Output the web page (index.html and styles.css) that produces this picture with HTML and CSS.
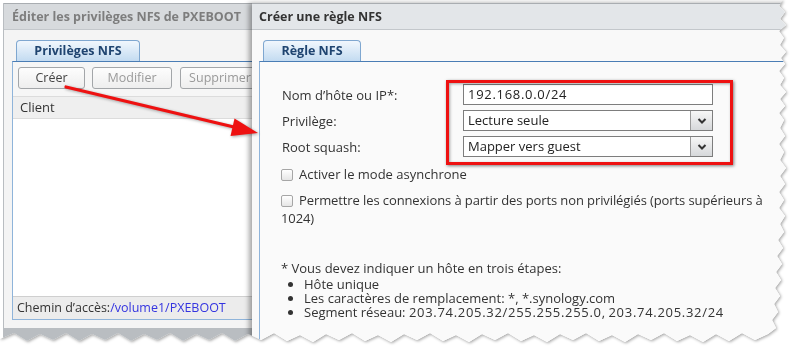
FILE: index.html
```html
<!DOCTYPE html>
<html lang="fr">
<head>
<meta charset="utf-8">
<title>Règle NFS</title>
<link rel="stylesheet" href="styles.css">
</head>
<body>
<div class="stage">
  <div class="paper">
    <div class="sheet">
      <section class="win win-left">
        <header class="titlebar">Éditer les privilèges NFS de PXEBOOT</header>
        <div class="winbody">
          <div class="tabs"><span class="tab tab-left">Privilèges NFS</span></div>
          <div class="panel panel-left">
            <div class="toolbar">
              <span class="btn btn-create">Créer</span>
              <span class="btn btn-dis btn-mod">Modifier</span>
              <span class="btn btn-dis btn-del">Supprimer</span>
            </div>
            <div class="grid-head">Client</div>
            <div class="grid-body"></div>
            <div class="grid-foot">Chemin d’accès:<span class="link">/volume1/PXEBOOT</span></div>
          </div>
        </div>
      </section>

      <section class="win win-right">
        <header class="titlebar titlebar-active">Créer une règle NFS</header>
        <div class="winbody winbody-right">
          <div class="tabs"><span class="tab tab-right">Règle NFS</span></div>
          <div class="panel panel-right">
            <div class="form">
              <span class="lbl">Nom d’hôte ou IP*:</span>
              <span class="field"><span class="num">192.168.0.0/24</span></span>
              <span class="lbl">Privilège:</span>
              <span class="field field-select">Lecture seule<span class="drop"><svg viewBox="0 0 10 8" width="10" height="8"><polyline points="1.5,2 5,5.5 8.5,2" fill="none" stroke="#333" stroke-width="2"/></svg></span></span>
              <span class="lbl">Root squash:</span>
              <span class="field field-select">Mapper vers guest<span class="drop"><svg viewBox="0 0 10 8" width="10" height="8"><polyline points="1.5,2 5,5.5 8.5,2" fill="none" stroke="#333" stroke-width="2"/></svg></span></span>
            </div>
            <p class="check"><span class="box"></span>Activer le mode asynchrone</p>
            <p class="check check-wrap"><span class="box"></span>Permettre les connexions à partir des ports non privilégiés (ports supérieurs à 1024)</p>
            <div class="note">
              <p class="note-head">* Vous devez indiquer un hôte en trois étapes:</p>
              <ul class="note-list">
                <li>Hôte unique</li>
                <li>Les caractères de remplacement: *, *.synology.com</li>
                <li>Segment réseau: <span class="num">203.74.205.32/255.255.255.0</span>, <span class="num">203.74.205.32/24</span></li>
              </ul>
            </div>
          </div>
        </div>
      </section>

      <div class="redbox"></div>
      <svg class="arrow" width="794" height="352" viewBox="0 0 794 352">
        <line x1="66" y1="87" x2="236" y2="127.5" stroke="#ee1111" stroke-width="3.2" stroke-linecap="round"/>
        <polygon points="258,133 234.5,118.5 230.5,136" fill="#ee1111"/>
      </svg>
    </div>
  </div>
</div>
</body>
</html>
```

FILE: styles.css
```css
* { box-sizing: border-box; }
html, body { margin: 0; padding: 0; background: #ffffff; }
body {
  width: 794px;
  height: 352px;
  overflow: hidden;
  font-family: "Open Sans", "Noto Sans", sans-serif;
  font-size: 13px;
  color: #333333;
}
.stage { position: relative; width: 794px; height: 352px; }
.paper {
  position: absolute;
  inset: 0;
  filter: drop-shadow(1px 1px 1.5px rgba(0, 0, 0, 0.35));
}
.sheet {
  position: absolute;
  inset: 0;
  background: #ffffff;
  clip-path: polygon(0 0, 783px 0, 779px 6px, 785px 12px, 780px 19px, 786px 25px, 779px 31px, 784px 38px, 780px 45px, 786px 52px, 781px 58px, 785px 64px, 779px 71px, 784px 78px, 780px 85px, 786px 92px, 780px 99px, 785px 106px, 779px 113px, 784px 120px, 780px 128px, 785px 136px, 779px 144px, 784px 152px, 780px 160px, 786px 168px, 780px 176px, 785px 184px, 779px 192px, 784px 200px, 779px 208px, 785px 216px, 780px 224px, 784px 232px, 778px 240px, 783px 248px, 777px 256px, 782px 264px, 776px 272px, 781px 280px, 775px 288px, 780px 296px, 774px 304px, 778px 312px, 772px 320px, 776px 328px, 768px 334px, 755px 340px, 742px 333px, 729px 341px, 716px 334px, 703px 342px, 690px 335px, 677px 341px, 664px 333px, 651px 340px, 638px 334px, 625px 342px, 612px 335px, 599px 341px, 586px 333px, 573px 340px, 560px 334px, 547px 342px, 534px 335px, 521px 341px, 508px 333px, 495px 340px, 482px 334px, 469px 342px, 456px 335px, 443px 341px, 430px 333px, 417px 340px, 404px 334px, 391px 342px, 378px 335px, 365px 341px, 352px 333px, 339px 340px, 326px 334px, 313px 342px, 300px 335px, 287px 341px, 274px 333px, 261px 340px, 248px 334px, 235px 341px, 222px 333px, 209px 340px, 196px 334px, 183px 341px, 170px 333px, 157px 340px, 144px 334px, 131px 341px, 118px 333px, 105px 340px, 92px 334px, 79px 341px, 66px 333px, 53px 340px, 40px 334px, 27px 341px, 14px 333px, 0 339px);
}

/* windows on the captured desktop */
.win {
  position: absolute;
  top: 3px;
  display: flex;
  flex-direction: column;
}
.win-left {
  left: 3px;
  width: 262px;
  height: 345px;
  border-left: 1px solid #b9bdc1;
  background: linear-gradient(#f4f4f4 0, #f4f4f4 325px, #b9bdc1 325px);
}
.win-right {
  left: 252px;
  width: 540px;
  height: 345px;
  background: #f9f9f9;
  box-shadow: -3px 0 5px rgba(0, 0, 0, 0.35);
}

.titlebar {
  height: 27px;
  flex: none;
  border-top: 1px solid #a9adb1;
  border-bottom: 1px solid #c3c7cb;
  background: #d7dadd;
  color: #7d7d7d;
  font-weight: 700;
  font-size: 12.5px;
  line-height: 25px;
  padding-left: 8px;
  white-space: nowrap;
  overflow: hidden;
}
.titlebar-active {
  background: #e3e6e9;
  color: #333333;
  padding-left: 7px;
}

.winbody {
  flex: 1;
  padding: 10px 0 0 8px;
  display: flex;
  flex-direction: column;
}
.winbody-right { padding-left: 7px; }

.tabs { height: 21px; flex: none; display: flex; padding-left: 4px; }
.tab {
  height: 21px;
  border: 1px solid #7fa7d0;
  border-bottom: none;
  border-radius: 4px 4px 0 0;
  background: linear-gradient(#f1f7fd, #c3dbf1);
  color: #1f4470;
  font-weight: 700;
  font-size: 12.5px;
  line-height: 20px;
  text-align: center;
}
.tab-left { width: 124px; }
.tab-right { width: 98px; }

.panel {
  border-top: 1px solid #4a7db5;
  border-left: 1px solid #8fb4da;
}
.panel-left {
  height: 259px;
  border-bottom: 1px solid #8fb4da;
  background: #ffffff;
  display: flex;
  flex-direction: column;
}
.toolbar {
  height: 34px;
  flex: none;
  padding: 5px 0 0 5px;
  display: flex;
  gap: 7px;
  background: #f6f6f6;
  white-space: nowrap;
}
.btn {
  height: 22px;
  flex: none;
  border: 1px solid #a3a6a9;
  border-radius: 3px;
  background: linear-gradient(#fdfdfd, #eeeeee);
  color: #444444;
  font-size: 12.5px;
  line-height: 20px;
  text-align: center;
}
.btn-create { width: 67px; }
.btn-mod { width: 80px; }
.btn-del { width: 80px; margin-left: 1px; }
.btn-dis { color: #9a9a9a; }

.grid-head {
  height: 23px;
  flex: none;
  border-top: 1px solid #dcdcdc;
  border-bottom: 1px solid #dcdcdc;
  background: #efefef;
  padding-left: 7px;
  line-height: 21px;
}
.grid-body { flex: 1; background: #ffffff; }
.grid-foot {
  height: 23px;
  flex: none;
  border-top: 1px solid #cfcfcf;
  background: #ececec;
  padding-left: 4px;
  font-size: 12.5px;
  line-height: 21px;
  white-space: nowrap;
}
.link { color: #3434e0; }

.panel-right {
  flex: 1;
  background: #fafafa;
  padding: 22px 0 0 22px;
}
.form {
  display: grid;
  grid-template-columns: 181px 250px;
  grid-auto-rows: 21px;
  row-gap: 5px;
  align-items: center;
}
.lbl { white-space: nowrap; }
.field {
  height: 21px;
  border: 1px solid #7d7d7d;
  background: #ffffff;
  color: #222222;
  padding-left: 4px;
  line-height: 19px;
  display: flex;
  justify-content: space-between;
}
.field-select { padding-right: 0; }
.drop {
  width: 22px;
  height: 19px;
  border-left: 1px solid #9a9a9a;
  background: linear-gradient(#f7f7f7, #d6d8da);
  display: flex;
  align-items: center;
  justify-content: center;
}
.drop svg { display: block; }
.num { letter-spacing: 0.7px; }

.check {
  margin: 8px 0 0 -1px;
  line-height: 18px;
  width: 486px;
}
.check-wrap { margin-top: 8px; letter-spacing: -0.1px; }
.box {
  display: inline-block;
  width: 12px;
  height: 12px;
  border: 1px solid #a6a6a6;
  border-radius: 2px;
  background: linear-gradient(#ffffff, #e6e6e6);
  vertical-align: -2px;
  margin-right: 6px;
}

.note { margin-top: 34px; line-height: 14px; }
.note-head { margin: 0 0 2px -1px; }
.note-list { margin: 0; padding-left: 22px; list-style: disc; }

.redbox {
  position: absolute;
  left: 446px;
  top: 80px;
  width: 287px;
  height: 85px;
  border: 3px solid #ee1111;
  box-shadow: 1px 1px 3px rgba(0, 0, 0, 0.5), inset 1px 1px 3px rgba(0, 0, 0, 0.35);
}
.arrow {
  position: absolute;
  left: 0;
  top: 0;
  filter: drop-shadow(1px 1px 1.5px rgba(0, 0, 0, 0.35));
}
```
